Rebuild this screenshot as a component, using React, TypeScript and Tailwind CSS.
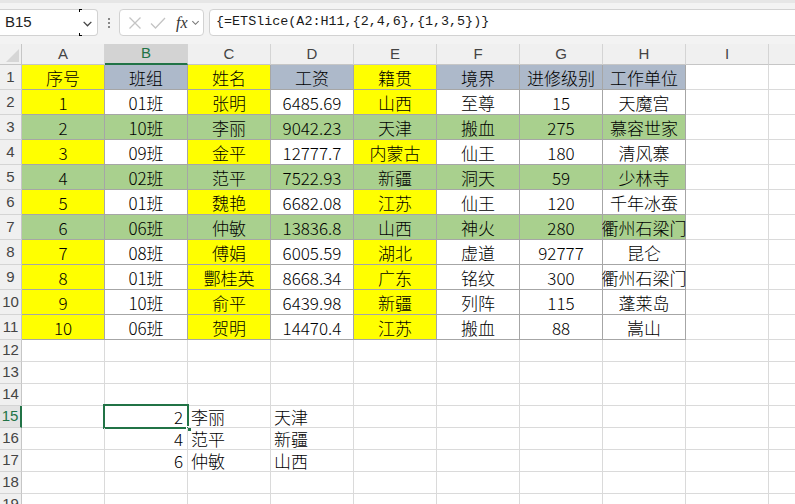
import React from "react";

type Fill = "Y" | "B" | "G" | "W";

const fillClass: Record<Fill, string> = {
  Y: "bg-[#ffff00]",
  B: "bg-[#adb9ca]",
  G: "bg-[#a9d08e]",
  W: "bg-white",
};

const data: string[][] = [
  ["序号", "班组", "姓名", "工资", "籍贯", "境界", "进修级别", "工作单位"],
  ["1", "01班", "张明", "6485.69", "山西", "至尊", "15", "天魔宫"],
  ["2", "10班", "李丽", "9042.23", "天津", "搬血", "275", "慕容世家"],
  ["3", "09班", "金平", "12777.7", "内蒙古", "仙王", "180", "清风寨"],
  ["4", "02班", "范平", "7522.93", "新疆", "洞天", "59", "少林寺"],
  ["5", "01班", "魏艳", "6682.08", "江苏", "仙王", "120", "千年冰蚕"],
  ["6", "06班", "仲敏", "13836.8", "山西", "神火", "280", "衢州石梁门"],
  ["7", "08班", "傅娟", "6005.59", "湖北", "虚道", "92777", "昆仑"],
  ["8", "01班", "酆桂英", "8668.34", "广东", "铭纹", "300", "衢州石梁门"],
  ["9", "10班", "俞平", "6439.98", "新疆", "列阵", "115", "蓬莱岛"],
  ["10", "06班", "贺明", "14470.4", "江苏", "搬血", "88", "嵩山"],
];

const headerFill: Fill[] = ["Y", "B", "Y", "B", "Y", "B", "B", "B"];
const plainFill: Fill[] = ["Y", "W", "Y", "W", "Y", "W", "W", "W"];
const greenFill: Fill[] = ["G", "G", "G", "G", "G", "G", "G", "G"];

const cols = ["A", "B", "C", "D", "E", "F", "G", "H", "I", "J"];

const fontCell = "font-['Noto_Sans_CJK_SC','Liberation_Sans',sans-serif] font-light";

function rowFill(r: number): Fill[] {
  if (r === 0) return headerFill;
  if (r === 2 || r === 4 || r === 6) return greenFill;
  return plainFill;
}

function RowHeader({ n, h, selected }: { n: number; h: string; selected?: boolean }) {
  return (
    <div
      className={`${h} w-[22px] shrink-0 flex items-center justify-center border-b border-[#d4d4d4] font-['Liberation_Sans',sans-serif] text-[15px] overflow-visible whitespace-nowrap ${
        selected
          ? "bg-[#e3e3e3] text-[#217346] border-r-2 border-r-[#217346]"
          : "bg-[#f0f0f0] text-[#444] border-r border-r-[#c6c6c6]"
      }`}
    >
      {n}
    </div>
  );
}

function Chevron({ size = 10, color = "#555" }: { size?: number; color?: string }) {
  return (
    <svg width={size} height={size} viewBox="0 0 10 10" fill="none">
      <path d="M1.5 3.5 L5 7 L8.5 3.5" stroke={color} strokeWidth="1.2" />
    </svg>
  );
}

export default function App() {
  return (
    <div className="w-[795px] h-[504px] overflow-hidden bg-white select-none">
      {/* formula toolbar */}
      <div className="h-[44px] bg-[#f3f3f3] border-t-[3px] border-[#e6e6e6] flex items-center gap-0 pb-[2px]">
        <div className="relative w-[98px] h-[27px] bg-white border border-[#d2d2d2] rounded-r-[4px] border-l-0 flex items-center pl-[5px] font-['Liberation_Sans',sans-serif] text-[15px] text-[#222]">
          B15
          <span className="absolute right-[4px] top-[8px]">
            <Chevron size={11} color="#444" />
          </span>
          <span className="absolute left-[79px] top-[-1px] w-[3px] h-[3px] border-l border-t border-black" />
          <span className="absolute left-[79px] bottom-[-1px] w-[3px] h-[3px] border-l border-b border-black" />
        </div>
        <div className="w-[21px] flex flex-col items-center justify-center gap-[2px]">
          <span className="w-[2px] h-[2px] bg-[#888]" />
          <span className="w-[2px] h-[2px] bg-[#888]" />
          <span className="w-[2px] h-[2px] bg-[#888]" />
        </div>
        <div className="w-[85px] h-[27px] bg-white border border-[#d2d2d2] rounded-[4px] flex items-center pl-[8px]">
          <svg width="14" height="14" viewBox="0 0 14 14" fill="none">
            <path d="M1.5 1.5 L12.5 12.5 M12.5 1.5 L1.5 12.5" stroke="#c4c4c4" strokeWidth="1.3" />
          </svg>
          <svg className="ml-[8px]" width="16" height="14" viewBox="0 0 16 14" fill="none">
            <path d="M1 7.5 L5.5 12 L15 2" stroke="#c4c4c4" strokeWidth="1.3" />
          </svg>
          <span className="ml-[10px] font-['Liberation_Serif',serif] italic text-[16px] text-[#333] leading-none">
            fx
          </span>
          <span className="ml-[3px]">
            <Chevron size={9} color="#777" />
          </span>
        </div>
        <div className="ml-[5px] flex-1 mr-[-6px] h-[27px] bg-white border border-[#d2d2d2] rounded-[4px] flex items-center pl-[6px] font-['Liberation_Mono',monospace] text-[13.4px] text-[#1a1a1a] overflow-hidden whitespace-nowrap">
          {"{=ETSlice(A2:H11,{2,4,6},{1,3,5})}"}
        </div>
      </div>

      {/* column header row */}
      <div className="flex h-[21px]">
        <div className="relative w-[22px] shrink-0 bg-[#f0f0f0] border-r border-b border-[#c6c6c6]">
          <svg className="absolute right-[2px] bottom-[2px]" width="13" height="13" viewBox="0 0 13 13">
            <path d="M13 0 L13 13 L0 13 Z" fill="#d6d6d6" />
          </svg>
        </div>
        {cols.map((c) => (
          <div
            key={c}
            className={`w-[83px] shrink-0 flex items-center justify-center font-['Liberation_Sans',sans-serif] text-[15px] border-r border-[#d4d4d4] ${
              c === "B"
                ? "bg-[#d3d3d3] text-[#217346] border-b-2 border-b-[#217346]"
                : "bg-[#f0f0f0] text-[#444] border-b border-b-[#c6c6c6]"
            }`}
          >
            {c === "J" ? "" : c}
          </div>
        ))}
      </div>

      {/* data rows */}
      {data.map((row, r) => {
        const fills = rowFill(r);
        return (
          <div key={r} className="flex h-[25px]">
            <RowHeader n={r + 1} h="h-[25px]" />
            {cols.map((c, ci) => {
              if (ci < 8) {
                return (
                  <div
                    key={c}
                    className={`w-[83px] shrink-0 flex items-center justify-center whitespace-nowrap overflow-visible border-r border-b border-[#a6a6a6] ${fillClass[fills[ci]]} ${fontCell} text-[17px] leading-[25px] text-black`}
                  >
                    {row[ci]}
                  </div>
                );
              }
              return (
                <div key={c} className="w-[83px] shrink-0 border-r border-b border-[#dadada]" />
              );
            })}
          </div>
        );
      })}

      {/* empty & result rows */}
      {[12, 13, 14, 15, 16, 17, 18, 19].map((n) => {
        const result: Record<number, [string, string, string]> = {
          15: ["2", "李丽", "天津"],
          16: ["4", "范平", "新疆"],
          17: ["6", "仲敏", "山西"],
        };
        const res = result[n];
        return (
          <div key={n} className="flex h-[22px]">
            <RowHeader n={n} h="h-[22px]" selected={n === 15} />
            {cols.map((c, ci) => {
              let content: React.ReactNode = null;
              let align = "";
              if (res && ci === 1) {
                content = res[0];
                align = "justify-end pr-[4px]";
              } else if (res && ci === 2) {
                content = res[1];
                align = "justify-start pl-[3px]";
              } else if (res && ci === 3) {
                content = res[2];
                align = "justify-start pl-[3px]";
              }
              const sel = n === 15 && ci === 1;
              return (
                <div
                  key={c}
                  className={`relative w-[83px] shrink-0 flex items-end pb-[1px] ${align} border-r border-b border-[#dadada] ${fontCell} text-[17px] leading-[18px] text-black whitespace-nowrap`}
                >
                  {content}
                  {sel && (
                    <>
                      <span className="absolute left-[-2px] top-[-2px] right-[-2px] bottom-[-2px] border-2 border-[#217346] pointer-events-none" />
                      <span className="absolute right-[-5px] bottom-[-5px] w-[6px] h-[6px] bg-[#217346] border border-white pointer-events-none" />
                    </>
                  )}
                </div>
              );
            })}
          </div>
        );
      })}
    </div>
  );
}
